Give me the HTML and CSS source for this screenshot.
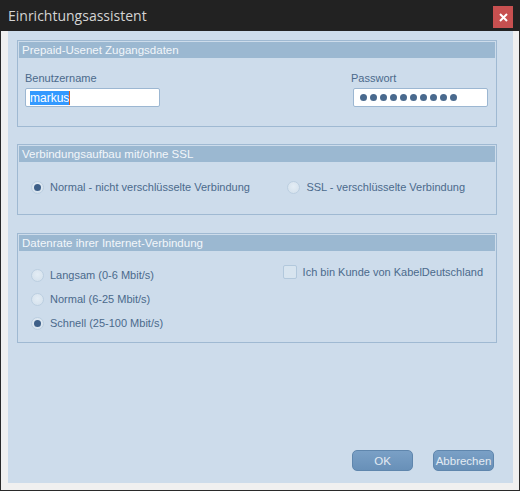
FILE: index.html
```html
<!DOCTYPE html>
<html lang="de">
<head>
<meta charset="utf-8">
<title>Einrichtungsassistent</title>
<link rel="stylesheet" href="styles.css">
</head>
<body>
<div class="window">
  <div class="titlebar">
    <span class="title">Einrichtungsassistent</span>
    <span class="close"><svg width="9" height="9" viewBox="0 0 9 9"><path d="M1 1L8 8M8 1L1 8" stroke="#fff" stroke-width="2"/></svg></span>
  </div>
  <div class="frame">
    <div class="panel">
      <div class="group g1">
        <div class="ghead">Prepaid-Usenet Zugangsdaten</div>
        <div class="gbody cred">
          <div class="field">
            <label class="lbl">Benutzername</label>
            <div class="input"><span class="sel">markus</span><span class="caret"></span></div>
          </div>
          <div class="field pw">
            <label class="lbl">Passwort</label>
            <div class="input dots"><i></i><i></i><i></i><i></i><i></i><i></i><i></i><i></i><i></i><i></i></div>
          </div>
        </div>
      </div>
      <div class="group g2">
        <div class="ghead">Verbindungsaufbau mit/ohne SSL</div>
        <div class="gbody ssl">
          <div class="opt"><span class="radio on"></span>Normal - nicht verschlüsselte Verbindung</div>
          <div class="opt o2"><span class="radio"></span>SSL - verschlüsselte Verbindung</div>
        </div>
      </div>
      <div class="group g3">
        <div class="ghead">Datenrate ihrer Internet-Verbindung</div>
        <div class="gbody rate">
          <div class="col">
            <div class="opt"><span class="radio"></span>Langsam (0-6 Mbit/s)</div>
            <div class="opt"><span class="radio"></span>Normal (6-25 Mbit/s)</div>
            <div class="opt"><span class="radio on"></span>Schnell (25-100 Mbit/s)</div>
          </div>
          <div class="opt chk"><span class="box"></span>Ich bin Kunde von KabelDeutschland</div>
        </div>
      </div>
      <div class="spacer"></div>
      <div class="buttons">
        <button class="btn">OK</button>
        <button class="btn">Abbrechen</button>
      </div>
    </div>
  </div>
</div>
</body>
</html>
```
FILE: styles.css
```css
html, body { margin: 0; padding: 0; }
body { width: 520px; height: 491px; background: #f0f0f0; font-family: "Liberation Sans", Arial, sans-serif; font-size: 11px; }
.window { box-sizing: border-box; width: 520px; height: 491px; border: 1px solid #2a2a2a; border-top: 0; display: flex; flex-direction: column; background: #f0f0f0; }
.titlebar { height: 31px; background: #222222; display: flex; align-items: flex-start; justify-content: space-between; flex: none; margin: 0 -1px; padding-left: 8px; }
.title { color: #d4d4d4; font-family: "Open Sans", "Liberation Sans", sans-serif; font-size: 14px; line-height: 31px; }
.close { width: 20px; height: 22px; background: #c75050; margin-top: 6px; margin-right: 7px; display: flex; align-items: center; justify-content: center; }
.frame { flex: 1; padding: 0 6px 7px 7px; display: flex; }
.panel { flex: 1; background: #cddceb; padding: 9px 0 0 9px; display: flex; flex-direction: column; }
.group { width: 480px; box-sizing: border-box; border: 1px solid #9fb9d2; padding: 1px; flex: none; }
.g1 { height: 87px; }
.g2 { height: 71px; margin-top: 17px; }
.g3 { height: 110px; margin-top: 18px; }
.ghead { height: 16px; background: #9bb8d1; color: #f2f6fa; line-height: 16px; padding-left: 3px; font-size: 11.5px; }
.gbody { color: #4b6a8c; }
.cred { display: flex; justify-content: space-between; padding: 13px 7px 0 6px; }
.field { display: flex; flex-direction: column; }
.lbl { line-height: 14px; height: 15px; font-size: 11px; }
.pw .lbl { margin-left: -2px; }
.input { box-sizing: border-box; width: 135px; height: 19px; background: #fff; border: 1px solid #9cb7d2; border-radius: 2px; display: flex; align-items: center; padding-left: 4px; margin-top: 2px; }
.sel { background: #3399ff; color: #fff; line-height: 14px; font-size: 12px; }
.caret { width: 1px; height: 14px; background: #e06020; }
.dots { padding-left: 6px; gap: 3px; }
.dots i { width: 7px; height: 7px; border-radius: 50%; background: #4a6a8e; flex: none; }
.opt { display: flex; align-items: center; height: 24px; color: #4b6a8c; font-size: 11px; }
.ssl { display: flex; padding: 13px 0 0 12px; }
.o2 { margin-left: auto; margin-right: 30px; }
.radio { flex: none; width: 13px; height: 13px; box-sizing: border-box; border-radius: 50%; border: 1px solid #bccfe1; background: radial-gradient(circle at 50% 40%, #e4edf5, #d2dfeb); margin-right: 6px; position: relative; }
.radio.on::after { content: ""; position: absolute; left: 2px; top: 2px; width: 7px; height: 7px; border-radius: 50%; background: #3d5f88; }
.rate { display: flex; padding: 12px 0 0 12px; }
.col { display: flex; flex-direction: column; }
.chk { margin-left: auto; margin-right: 12px; margin-top: 1px; height: 16px; align-self: flex-start; }
.box { flex: none; width: 14px; height: 14px; box-sizing: border-box; border: 1px solid #b2c8dc; border-radius: 2px; background: #d7e4ef; margin-right: 6px; }
.spacer { flex: 1; }
.buttons { display: flex; justify-content: flex-end; gap: 20px; padding-right: 19px; padding-bottom: 12px; }
.btn { width: 61px; height: 21px; border: 1px solid #5f86ad; border-radius: 5px; background: linear-gradient(#7aa0c6, #6890b8); color: #e3ebf3; font-family: "Liberation Sans", Arial, sans-serif; font-size: 11.5px; padding: 0; }
```
